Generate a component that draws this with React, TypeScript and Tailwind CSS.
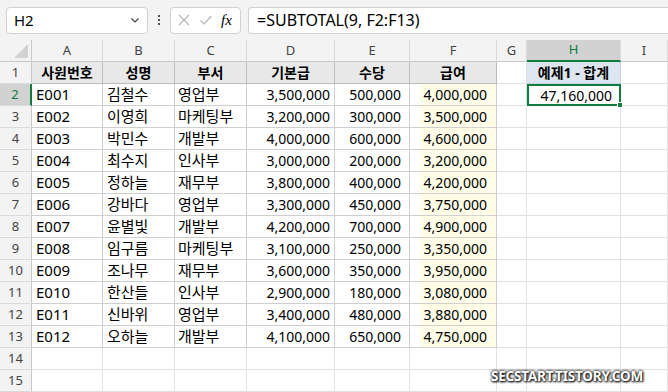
import React from "react";

const font = { fontFamily: '"Noto Sans", "Noto Sans CJK KR", sans-serif' };

const cols = ["A", "B", "C", "D", "E", "F", "G", "H", "I"];

const rows = [
  ["E001", "김철수", "영업부", "3,500,000", "500,000", "4,000,000"],
  ["E002", "이영희", "마케팅부", "3,200,000", "300,000", "3,500,000"],
  ["E003", "박민수", "개발부", "4,000,000", "600,000", "4,600,000"],
  ["E004", "최수지", "인사부", "3,000,000", "200,000", "3,200,000"],
  ["E005", "정하늘", "재무부", "3,800,000", "400,000", "4,200,000"],
  ["E006", "강바다", "영업부", "3,300,000", "450,000", "3,750,000"],
  ["E007", "윤별빛", "개발부", "4,200,000", "700,000", "4,900,000"],
  ["E008", "임구름", "마케팅부", "3,100,000", "250,000", "3,350,000"],
  ["E009", "조나무", "재무부", "3,600,000", "350,000", "3,950,000"],
  ["E010", "한산들", "인사부", "2,900,000", "180,000", "3,080,000"],
  ["E011", "신바위", "영업부", "3,400,000", "480,000", "3,880,000"],
  ["E012", "오하늘", "개발부", "4,100,000", "650,000", "4,750,000"],
];

const headers = ["사원번호", "성명", "부서", "기본급", "수당", "급여"];

const gridCols = "grid grid-cols-[32px_71px_72px_72px_88px_75px_87px_30px_94px_1fr]";

function RowHead({ n, active }: { n: number; active?: boolean }) {
  return (
    <div
      className={
        "flex h-[22px] items-center justify-center border-b border-[#dadada] text-[13px] " +
        (active
          ? "bg-[#d2d2d2] text-[#107c41] border-r-2 border-r-[#107c41]"
          : "bg-[#f3f3f3] text-[#444] border-r border-r-[#c8c8c8]")
      }
    >
      {n}
    </div>
  );
}

function Blank() {
  return <div className="h-[22px] border-b border-r border-[#e1e1e1]" />;
}

export default function App() {
  return (
    <div className="w-[668px] h-[392px] overflow-hidden bg-white relative text-black" style={font}>
      {/* formula bar */}
      <div className="flex h-[40px] items-center bg-[#f3f3f3] pl-[6px]">
        <div className="flex h-[27px] w-[142px] items-center justify-between rounded border border-[#d1d1d1] bg-white pl-[7px] pr-[6px] text-[15px]">
          <span>H2</span>
          <svg width="12" height="12" viewBox="0 0 12 12" fill="none" stroke="#444" strokeWidth="1.2">
            <path d="M2.5 4.5 L6 8 L9.5 4.5" />
          </svg>
        </div>
        <div className="flex w-[22px] flex-col items-center gap-[2px]">
          <span className="h-[2px] w-[2px] bg-[#555]" />
          <span className="h-[2px] w-[2px] bg-[#555]" />
          <span className="h-[2px] w-[2px] bg-[#555]" />
        </div>
        <div className="flex h-[27px] w-[71px] items-center gap-[8px] rounded border border-[#d1d1d1] bg-white px-[6px]">
          <svg width="14" height="14" viewBox="0 0 14 14" stroke="#b5b5b5" strokeWidth="1.2">
            <path d="M2 2 L12 12 M12 2 L2 12" />
          </svg>
          <svg width="14" height="14" viewBox="0 0 14 14" fill="none" stroke="#b5b5b5" strokeWidth="1.2">
            <path d="M1.5 7.5 L5 11 L12.5 3" />
          </svg>
          <span className="text-[15px] italic" style={{ fontFamily: '"Liberation Serif", serif' }}>
            fx
          </span>
        </div>
        <div className="ml-[7px] flex h-[27px] flex-1 items-center rounded-l border border-r-0 border-[#d1d1d1] bg-white pl-[8px] text-[16px]">
          =SUBTOTAL(9, F2:F13)
        </div>
      </div>

      {/* grid */}
      <div className={gridCols}>
        {/* column headers */}
        <div className="relative h-[22px] border-b border-r border-[#c8c8c8] bg-[#f3f3f3]">
          <div className="absolute bottom-[3px] right-[3px] h-0 w-0 border-b-[14px] border-l-[14px] border-b-[#d2d2d2] border-l-transparent" />
        </div>
        {cols.map((c) => (
          <div
            key={c}
            className={
              "flex h-[22px] items-center justify-center text-[13px] border-r border-[#dadada] " +
              (c === "H"
                ? "bg-[#d2d2d2] text-[#107c41] border-b-2 border-b-[#107c41]"
                : "bg-[#f3f3f3] text-[#444] border-b border-b-[#c8c8c8]")
            }
          >
            {c}
          </div>
        ))}

        {/* row 1 */}
        <RowHead n={1} />
        {headers.map((h) => (
          <div
            key={h}
            className="flex h-[22px] items-center justify-center border-b border-r border-[#bcbcbc] bg-[#e8e8e8] text-[14px] font-bold"
          >
            {h}
          </div>
        ))}
        <Blank />
        <div className="flex h-[22px] items-center justify-center border-b border-r border-[#c6d2e0] bg-[#dde6f0] text-[14px] font-bold">
          예제1 - 합계
        </div>
        <Blank />

        {/* rows 2..15 */}
        {Array.from({ length: 14 }).map((_, i) => {
          const n = i + 2;
          const r = rows[i];
          return (
            <React.Fragment key={n}>
              <RowHead n={n} active={n === 2} />
              {r ? (
                <>
                  <div className="flex h-[22px] items-center border-b border-r border-[#cfcfcf] pl-[4px] text-[15px]">{r[0]}</div>
                  <div className="flex h-[22px] items-center border-b border-r border-[#cfcfcf] pl-[4px] text-[15px]">{r[1]}</div>
                  <div className="flex h-[22px] items-center border-b border-r border-[#cfcfcf] pl-[3px] text-[15px]">{r[2]}</div>
                  <div className="flex h-[22px] items-center justify-end border-b border-r border-[#cfcfcf] pr-[4px] text-[14px]">{r[3]}</div>
                  <div className="flex h-[22px] items-center justify-end border-b border-r border-[#cfcfcf] pr-[8px] text-[14px]">{r[4]}</div>
                  <div className="flex h-[22px] border-b border-r border-[#cfcfcf] pl-[10px] text-[14px]">
                    <div className="flex flex-1 items-center justify-end bg-[#fffde8] pr-[9px]">{r[5]}</div>
                  </div>
                </>
              ) : (
                <>
                  <Blank />
                  <Blank />
                  <Blank />
                  <Blank />
                  <Blank />
                  <Blank />
                </>
              )}
              <Blank />
              {n === 2 ? (
                <div className="relative flex h-[22px] items-center justify-end border-2 border-[#107c41] pr-[7px] text-[14px]">
                  47,160,000
                  <span className="absolute -bottom-[4px] -right-[4px] h-[6px] w-[6px] border border-white bg-[#107c41]" />
                </div>
              ) : (
                <Blank />
              )}
              <Blank />
            </React.Fragment>
          );
        })}
      </div>

      <div
        className="absolute bottom-[6px] right-[25px] text-[13.5px] font-bold tracking-[-0.2px] text-white"
        style={{ textShadow: "0 0 3px #222, 0 0 3px #222, 1px 1px 2px #000" }}
      >
        SECSTART.TISTORY.COM
      </div>
    </div>
  );
}
